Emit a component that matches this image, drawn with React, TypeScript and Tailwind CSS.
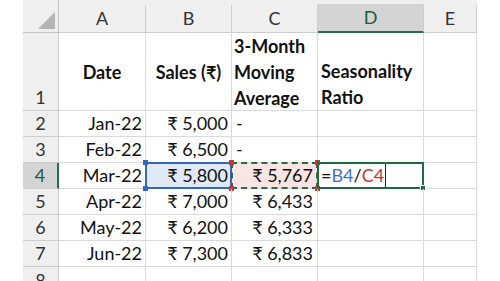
const rows = [
  { n: "2", date: "Jan-22", sales: "₹ 5,000", avg: "-" },
  { n: "3", date: "Feb-22", sales: "₹ 6,500", avg: "-" },
  { n: "4", date: "Mar-22", sales: "₹ 5,800", avg: "₹ 5,767" },
  { n: "5", date: "Apr-22", sales: "₹ 7,000", avg: "₹ 6,433" },
  { n: "6", date: "May-22", sales: "₹ 6,200", avg: "₹ 6,333" },
  { n: "7", date: "Jun-22", sales: "₹ 7,300", avg: "₹ 6,833" },
];

const font = { fontFamily: "Lato, 'Noto Sans', sans-serif" };

function ColHead({ label, active }: { label: string; active?: boolean }) {
  return (
    <div className="flex flex-col bg-[#efefef]">
      <div className="h-[8px]" />
      <div
        className={`flex-1 flex items-center justify-center border-r border-[#cdcdcd] text-[18px] ${
          active
            ? "bg-[#d4d4d4] border-b-2 border-b-[#217346] text-[#1d5e38]"
            : "border-b border-b-[#cdcdcd] text-[#333]"
        }`}
      >
        {label}
      </div>
    </div>
  );
}

function Handle({ pos, color }: { pos: string; color: string }) {
  return <div className={`absolute w-[5px] h-[5px] ${pos} ${color}`} />;
}

export default function App() {
  return (
    <div className="w-[500px] h-[281px] overflow-hidden bg-white flex text-[#111]" style={font}>
      <div className="w-[23px] shrink-0" />
      <div className="grid grid-cols-[36px_87px_86px_86px_106px_53px] grid-rows-[33px_78px_26px_26px_26px_26px_26px_26px_26px] w-[454px]">
        {/* corner */}
        <div className="relative bg-[#efefef] border-r border-b border-[#c4c4c4]">
          <svg className="absolute left-[15px] top-[12px]" width="18" height="18" viewBox="0 0 18 18">
            <polygon points="0,17 17,0 17,17" fill="#b4b4b4" />
          </svg>
        </div>
        <ColHead label="A" />
        <ColHead label="B" />
        <ColHead label="C" />
        <ColHead label="D" active />
        <ColHead label="E" />

        {/* row 1 */}
        <div className="bg-[#efefef] border-r border-b border-[#cdcdcd] flex items-end justify-center text-[18px] leading-[26px] text-[#333]">
          1
        </div>
        <div className="border-r border-b border-[#dadada] flex items-center justify-center font-bold text-[18px] leading-[26px]">
          Date
        </div>
        <div className="border-r border-b border-[#dadada] flex items-center justify-center font-bold text-[18px] leading-[26px]">
          Sales (₹)
        </div>
        <div className="border-r border-b border-[#dadada] flex flex-col pl-[2px] font-bold text-[18px] leading-[26px]">
          <span>3-Month</span>
          <span>Moving</span>
          <span>Average</span>
        </div>
        <div className="border-r border-b border-[#dadada] flex flex-col justify-end pl-[3px] font-bold text-[18px] leading-[26px]">
          <span>Seasonality</span>
          <span>Ratio</span>
        </div>
        <div className="border-r border-b border-[#dadada]" />

        {rows.map((r) => {
          const sel = r.n === "4";
          return [
            <div
              key={r.n + "h"}
              className={`flex items-center justify-center text-[18px] border-b border-[#cdcdcd] ${
                sel ? "bg-[#d4d4d4] border-r-2 border-r-[#217346] text-[#1d5e38]" : "bg-[#efefef] border-r text-[#333]"
              }`}
            >
              {r.n}
            </div>,
            <div key={r.n + "a"} className="border-r border-b border-[#dadada] flex items-center justify-end pr-[3px] text-[18px]">
              {r.date}
            </div>,
            <div
              key={r.n + "b"}
              className={`relative border-r border-b border-[#dadada] flex items-center justify-end pr-[3px] text-[18px] ${
                sel ? "bg-[#e0eaf7]" : ""
              }`}
            >
              {r.sales}
              {sel && (
                <>
                  <div className="absolute -left-px -top-px right-[-1px] bottom-[-1px] border-2 border-[#3566c2]" />
                  <Handle pos="-left-[3px] -top-[3px]" color="bg-[#3566c2]" />
                  <Handle pos="-left-[3px] -bottom-[3px]" color="bg-[#3566c2]" />
                </>
              )}
            </div>,
            <div
              key={r.n + "c"}
              className={`relative border-r border-b border-[#dadada] flex items-center text-[18px] ${
                r.avg === "-" ? "justify-start pl-[4px]" : "justify-end pr-[4px]"
              } ${sel ? "bg-[#fbe4e4]" : ""}`}
            >
              {r.avg}
              {sel && (
                <>
                  <div className="absolute -left-px -top-px right-[-1px] bottom-[-1px] border-2 border-dashed border-[#2e6a3c]" />
                  <Handle pos="-left-[3px] -top-[3px]" color="bg-[#c8383a]" />
                  <Handle pos="-left-[3px] -bottom-[3px]" color="bg-[#c8383a]" />
                  <Handle pos="-right-[3px] -top-[3px]" color="bg-[#c8383a]" />
                  <Handle pos="-right-[3px] -bottom-[3px]" color="bg-[#c8383a]" />
                </>
              )}
            </div>,
            <div key={r.n + "d"} className="relative border-r border-b border-[#dadada] flex items-center pl-[3px] text-[18px]">
              {sel && (
                <>
                  <span>=</span>
                  <span className="text-[#3d6fcf]">B4</span>
                  <span>/</span>
                  <span className="text-[#c0393b]">C4</span>
                  <span className="w-px h-[24px] bg-[#222] ml-[1px]" />
                  <div className="absolute -left-px -top-px right-[-1px] bottom-[-1px] border-2 border-[#1f6b3f]" />
                  <div className="absolute -right-[3px] -bottom-[3px] w-[6px] h-[6px] bg-[#1f6b3f] border border-white" />
                </>
              )}
            </div>,
            <div key={r.n + "e"} className="border-r border-b border-[#dadada]" />,
          ];
        })}

        {/* row 8 */}
        <div className="bg-[#efefef] border-r border-[#cdcdcd] flex items-center justify-center text-[18px] text-[#333]">
          8
        </div>
        <div className="border-r border-[#dadada]" />
        <div className="border-r border-[#dadada]" />
        <div className="border-r border-[#dadada]" />
        <div className="border-r border-[#dadada]" />
        <div className="border-r border-[#dadada]" />
      </div>
    </div>
  );
}
